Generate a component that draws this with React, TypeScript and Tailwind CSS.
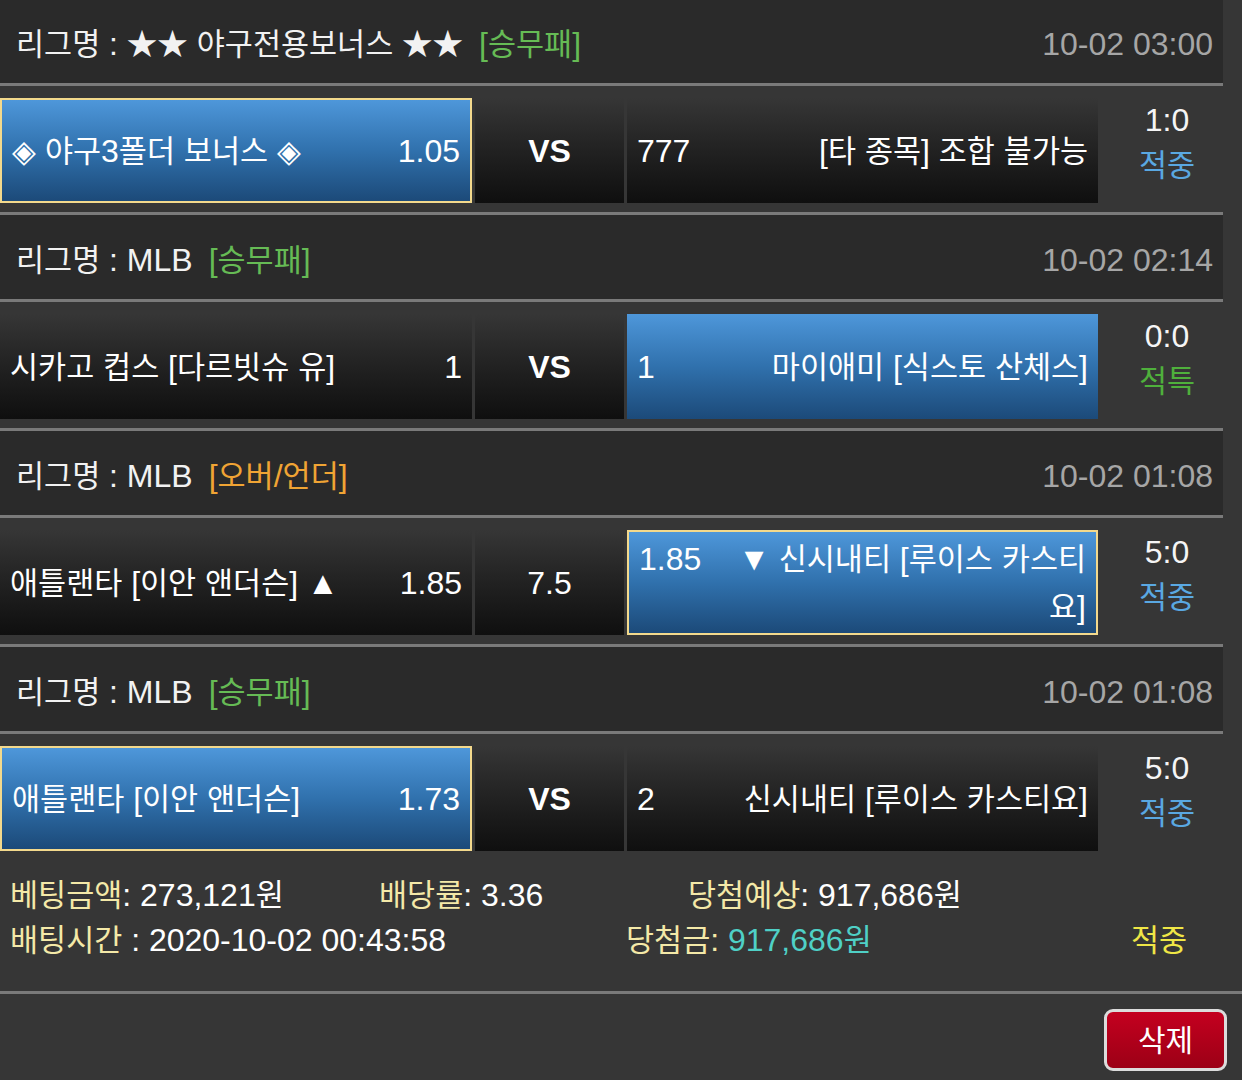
import React from "react";

type Side = {
  name: string;
  odds: string;
  selected?: boolean;
  bordered?: boolean;
};

type Section = {
  league: string;
  type: string;
  typeKind: "green" | "orange";
  time: string;
  home: Side;
  mid: string;
  midBold: boolean;
  away: Side;
  score: string;
  result: string;
  resultKind: "blue" | "green";
};

const sections: Section[] = [
  {
    league: "★★ 야구전용보너스 ★★",
    type: "[승무패]",
    typeKind: "green",
    time: "10-02 03:00",
    home: { name: "◈ 야구3폴더 보너스 ◈", odds: "1.05", selected: true, bordered: true },
    mid: "VS",
    midBold: true,
    away: { name: "[타 종목] 조합 불가능", odds: "777" },
    score: "1:0",
    result: "적중",
    resultKind: "blue",
  },
  {
    league: "MLB",
    type: "[승무패]",
    typeKind: "green",
    time: "10-02 02:14",
    home: { name: "시카고 컵스 [다르빗슈 유]", odds: "1" },
    mid: "VS",
    midBold: true,
    away: { name: "마이애미 [식스토 산체스]", odds: "1", selected: true },
    score: "0:0",
    result: "적특",
    resultKind: "green",
  },
  {
    league: "MLB",
    type: "[오버/언더]",
    typeKind: "orange",
    time: "10-02 01:08",
    home: { name: "애틀랜타 [이안 앤더슨] ▲", odds: "1.85" },
    mid: "7.5",
    midBold: false,
    away: { name: "▼ 신시내티 [루이스 카스티요]", odds: "1.85", selected: true, bordered: true },
    score: "5:0",
    result: "적중",
    resultKind: "blue",
  },
  {
    league: "MLB",
    type: "[승무패]",
    typeKind: "green",
    time: "10-02 01:08",
    home: { name: "애틀랜타 [이안 앤더슨]", odds: "1.73", selected: true, bordered: true },
    mid: "VS",
    midBold: true,
    away: { name: "신시내티 [루이스 카스티요]", odds: "2" },
    score: "5:0",
    result: "적중",
    resultKind: "blue",
  },
];

// Hangul and symbol glyphs are drawn slightly smaller than the Latin text,
// as in the reference font. Each glyph gets its own span so that no span
// is split across two lines.
function K({ t }: { t: string }) {
  const parts = t.split(/([\uAC00-\uD7A3\u2605\u25C8])/);
  return (
    <>
      {parts.map((p, i) =>
        i % 2 === 1 ? (
          <span key={i} className="text-[30.5px]">
            {p}
          </span>
        ) : p ? (
          <React.Fragment key={i}>{p}</React.Fragment>
        ) : null
      )}
    </>
  );
}

function cellBg(side: Side) {
  if (side.selected && side.bordered)
    return "bg-linear-to-b from-[#4e97da] via-[#3071ad] to-[#1c4a79] border-2 border-[#f3d98c]";
  if (side.selected) return "bg-linear-to-b from-[#4e97da] via-[#3071ad] to-[#1c4a79]";
  return "bg-linear-to-b from-[#363636] to-[#0f0f0f]";
}

function HomeCell({ side }: { side: Side }) {
  return (
    <div className={`w-[472px] h-[105px] shrink-0 flex items-center px-[10px] ${cellBg(side)}`}>
      <div className="flex-1 flex items-start justify-between leading-[48px]">
        <span>
          <K t={side.name} />
        </span>
        <span className="shrink-0 pl-3">{side.odds}</span>
      </div>
    </div>
  );
}

function AwayCell({ side }: { side: Side }) {
  return (
    <div className={`w-[471px] h-[105px] shrink-0 flex items-center px-[10px] ${cellBg(side)}`}>
      <div className="flex-1 flex items-start leading-[48px]">
        <span className="shrink-0 pr-4">{side.odds}</span>
        <span className="flex-1 text-right">
          <K t={side.name} />
        </span>
      </div>
    </div>
  );
}

function SectionBlock({ s, first, last }: { s: Section; first: boolean; last: boolean }) {
  return (
    <div>
      <div
        className={`${first ? "h-[83px]" : "h-[84px]"} bg-[#2a2a2a] flex items-center justify-between pt-[5px] pl-[16px] pr-[10px]`}
      >
        <div className="flex items-center">
          <span className="text-[#f2f2f2]">
            <K t={`리그명 : ${s.league}`} />
          </span>
          <span className={`ml-4 ${s.typeKind === "green" ? "text-[#66bb55]" : "text-[#f0a434]"}`}>
            <K t={s.type} />
          </span>
        </div>
        <span className="text-[#a6a6a6]">{s.time}</span>
      </div>
      <div className="h-[3px] bg-[#7a7a7a]" />
      <div className={`pt-[12px] ${last ? "" : "pb-[9px]"} flex`}>
        <HomeCell side={s.home} />
        <div className="w-[3px] shrink-0" />
        <div className="w-[149px] h-[105px] shrink-0 flex items-center justify-center bg-linear-to-b from-[#363636] to-[#0f0f0f]">
          <span className={s.midBold ? "font-bold text-[32px]" : ""}>{s.mid}</span>
        </div>
        <div className="w-[3px] shrink-0" />
        <AwayCell side={s.away} />
        <div className="w-[125px] shrink-0 pl-[13px] flex flex-col items-center leading-[45px]">
          <span className="text-[#f5f5f5]">{s.score}</span>
          <span className={s.resultKind === "blue" ? "text-[#5aa8e2]" : "text-[#4fb03c]"}>
            <K t={s.result} />
          </span>
        </div>
      </div>
      {!last && <div className="h-[3px] bg-[#7a7a7a]" />}
    </div>
  );
}

export default function App() {
  return (
    <div className="w-[1242px] h-[1080px] overflow-hidden bg-[#363636] text-white text-[32px] font-['Liberation_Sans','Noto_Sans_CJK_KR',sans-serif]">
      <div className="w-[1223px]">
        {sections.map((s, i) => (
          <SectionBlock key={i} s={s} first={i === 0} last={i === sections.length - 1} />
        ))}
      </div>
      <div className="pt-[22px] pb-[28px] pl-[10px] leading-[45px]">
        <div className="flex">
          <span className="w-[369px] shrink-0">
            <span className="text-[#f4e9a8]">
              <K t="베팅금액" />
            </span>
            : 273,121<K t="원" />
          </span>
          <span className="w-[309px] shrink-0">
            <span className="text-[#f4e9a8]">
              <K t="배당률" />
            </span>
            : 3.36
          </span>
          <span>
            <span className="text-[#f4e9a8]">
              <K t="당첨예상" />
            </span>
            : 917,686<K t="원" />
          </span>
        </div>
        <div className="flex">
          <span className="w-[616px] shrink-0">
            <span className="text-[#f4e9a8]">
              <K t="배팅시간" />
            </span>{" "}
            : 2020-10-02 00:43:58
          </span>
          <span className="w-[505px] shrink-0">
            <span className="text-[#f4e9a8]">
              <K t="당첨금:" />
            </span>{" "}
            <span className="text-[#4fd0c6]">
              917,686<K t="원" />
            </span>
          </span>
          <span className="text-[#efe646]">
            <K t="적중" />
          </span>
        </div>
      </div>
      <div className="h-[3px] bg-[#7a7a7a]" />
      <div className="flex justify-end pt-[15px] pr-[15px]">
        <button className="w-[123px] h-[62px] rounded-[9px] border-[3px] border-[#dcdcdc] bg-linear-to-b from-[#c4001f] to-[#9c0016] text-white text-[30px] flex items-center justify-center">
          삭제
        </button>
      </div>
    </div>
  );
}
